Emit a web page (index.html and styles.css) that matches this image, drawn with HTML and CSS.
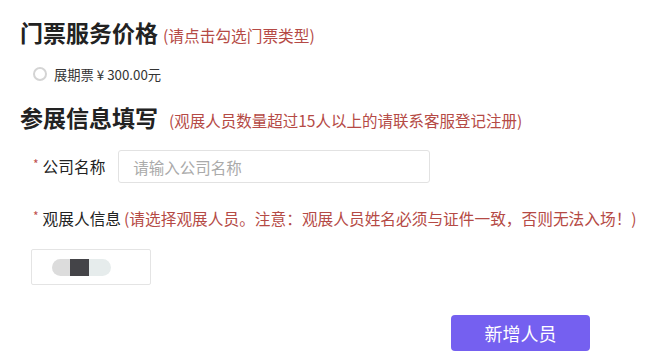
FILE: index.html
```html
<!DOCTYPE html>
<html lang="zh">
<head>
<meta charset="utf-8">
<link rel="stylesheet" href="styles.css">
</head>
<body>
<div class="page">
  <div class="section-title">
    <span class="title">门票服务价格</span>
    <span class="hint">(请点击勾选门票类型)</span>
  </div>
  <div class="ticket">
    <span class="radio"></span>
    <span class="ticket-text">展期票 ¥ 300.00元</span>
  </div>
  <div class="section-title second">
    <span class="title">参展信息填写</span>
    <span class="hint">(观展人员数量超过15人以上的请联系客服登记注册)</span>
  </div>
  <div class="form-row">
    <label class="label"><span class="req">*</span>公司名称</label>
    <div class="input">请输入公司名称</div>
  </div>
  <div class="visitor-row">
    <span class="req">*</span><span class="label-text">观展人信息</span>
    <span class="hint small">(请选择观展人员。注意：观展人员姓名必须与证件一致，否则无法入场！)</span>
  </div>
  <div class="person-card">
    <span class="blob b1"></span><span class="blob b2"></span><span class="blob b3"></span>
  </div>
  <div class="actions">
    <button class="btn">新增人员</button>
  </div>
</div>
</body>
</html>
```
FILE: styles.css
```css
* { box-sizing: border-box; }
html, body { margin: 0; padding: 0; background: #fff; }
body {
  font-family: "Microsoft YaHei", "Noto Sans CJK SC", "Noto Sans", sans-serif;
  color: #222;
}
.page { padding: 15px 0 0 20px; width: 650px; height: 357px; overflow: hidden; }
.section-title { display: flex; align-items: baseline; height: 32px; }
.title { font-size: 23px; font-weight: 700; color: #222; }
.hint { font-size: 15.7px; color: #b54a45; margin-left: 5px; }
.ticket { display: flex; align-items: center; margin: 15px 0 0 13px; height: 24px; }
.radio { width: 14px; height: 14px; border: 2px solid #d4d4d4; border-radius: 50%; background: #fff; }
.ticket-text { font-size: 13.3px; color: #333; margin-left: 7px; }
.second { margin-top: 14px; }
.second .hint { margin-left: 11px; font-size: 15.5px; }
.form-row { display: flex; align-items: center; margin: 18px 0 0 13px; }
.label { font-size: 15.7px; color: #222; display: flex; align-items: center; }
.req { color: #c0504d; font-size: 12px; margin-right: 4px; align-self: flex-start; }
.input {
  margin-left: 13px; width: 312px; height: 33px; border: 1px solid #e2e2e2; border-radius: 3px;
  font-size: 15.5px; color: #aaa; padding-left: 14px; display: flex; align-items: center;
}
.visitor-row { display: flex; align-items: center; margin: 24px 0 0 13px; font-size: 15.7px; }
.label-text { color: #222; }
.hint.small { margin-left: 3px; font-size: 15.7px; }
.person-card {
  margin: 19px 0 0 11px; width: 120px; height: 36px; border: 1px solid #e4e4e4; border-radius: 2px;
  display: flex; align-items: center; padding-left: 20px;
}
.blob { display: block; height: 17px; }
.b1 { width: 18px; background: #dcdcdc; border-radius: 9px 0 0 9px; }
.b2 { width: 19px; background: #444448; }
.b3 { width: 22px; background: #e6ecec; border-radius: 0 10px 10px 0; }
.actions { display: flex; justify-content: flex-start; padding-left: 431px; margin-top: 30px; }
.btn {
  width: 139px; height: 36px; background: #7560f0; color: #fff; border: none; border-radius: 4px;
  font-family: inherit; font-size: 18px;
}
```
